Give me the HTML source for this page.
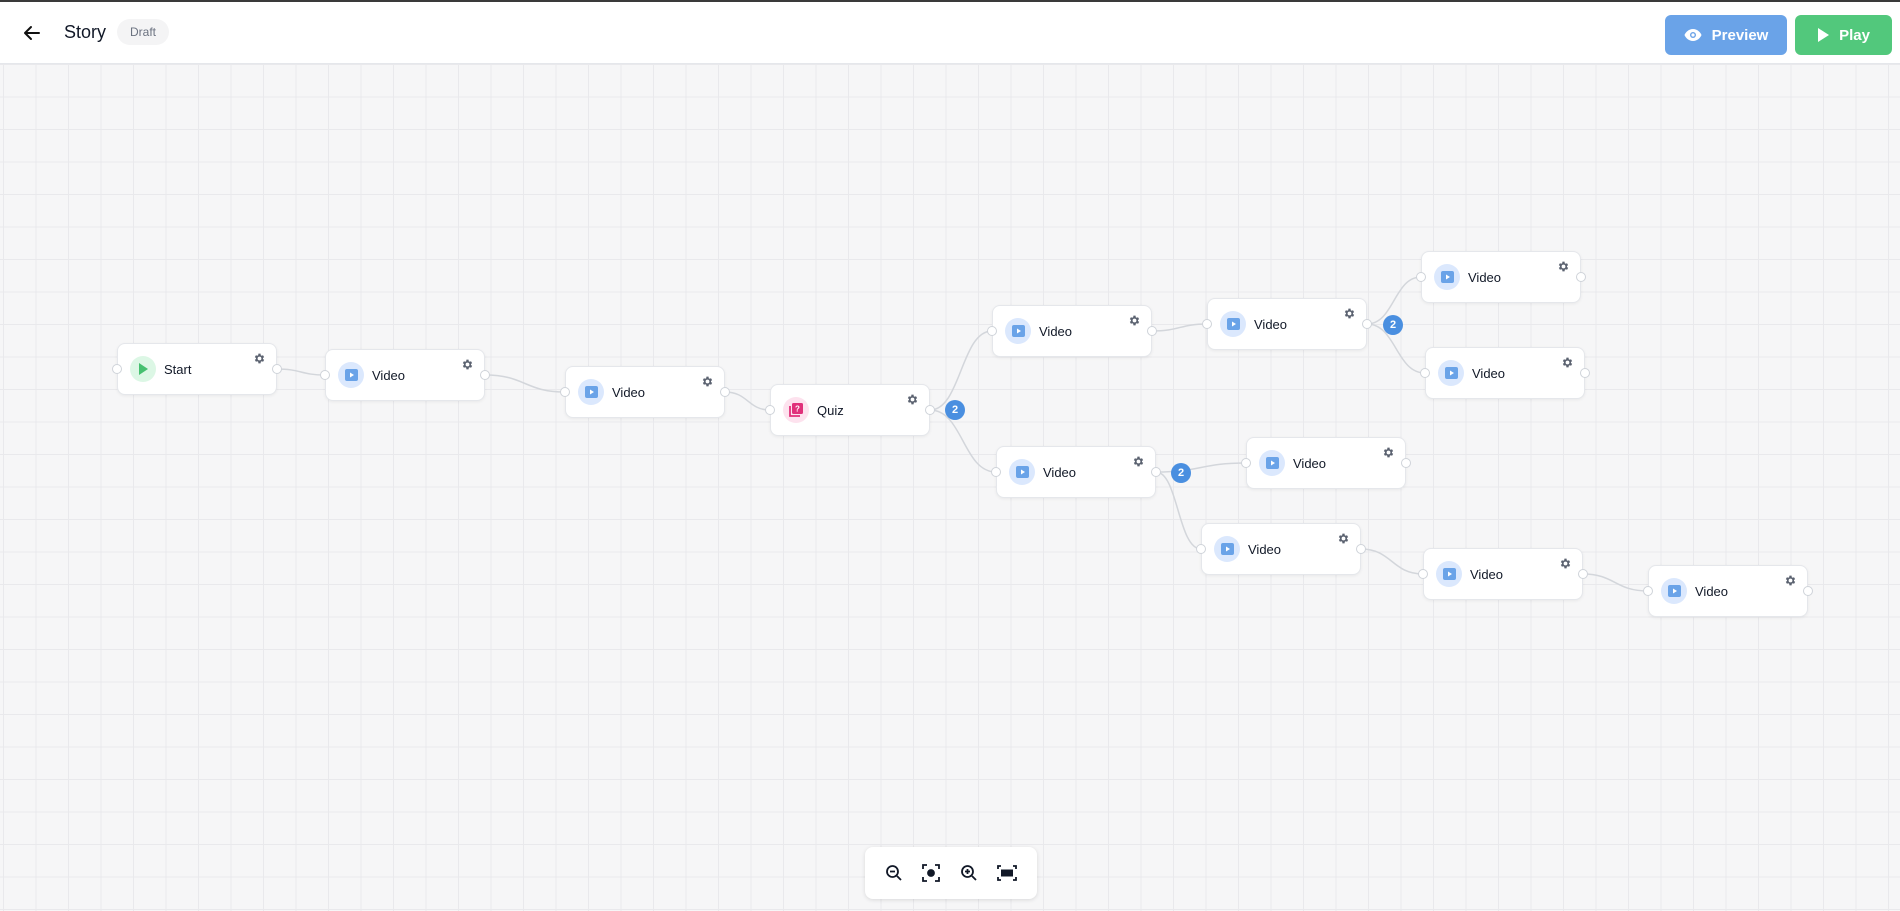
<!DOCTYPE html>
<html><head><meta charset="utf-8"><style>
*{margin:0;padding:0;box-sizing:border-box}
body{width:1900px;height:911px;overflow:hidden;font-family:"Liberation Sans",sans-serif;background:#f6f6f7;position:relative}
.top{position:absolute;left:0;top:0;width:1900px;height:2px;background:#3a3a3a}
.hdr{position:absolute;left:0;top:2px;width:1900px;height:62px;background:#fff;border-bottom:1px solid #e5e7eb}
.canvas{position:absolute;left:0;top:64px;width:1900px;height:847px;
background-image:linear-gradient(#e9e9ec 1px,transparent 1px),linear-gradient(90deg,#e9e9ec 1px,transparent 1px);
background-size:32.5px 32.5px;background-position:3px 0}
.btn{position:absolute;top:13px;height:40px;border-radius:6px;color:#fff;font-weight:bold;font-size:15px;display:flex;align-items:center;justify-content:center;gap:10px}
.node{position:absolute;width:160px;height:52px;background:#fff;border:1px solid #e5e7eb;border-radius:8px;box-shadow:0 1px 3px rgba(0,0,0,.06)}
.ic{position:absolute;left:12px;top:12px;width:26px;height:26px;border-radius:50%;display:flex;align-items:center;justify-content:center}
.lbl{position:absolute;left:46px;top:18px;font-size:13px;color:#111827}
.gear{position:absolute;right:10px;top:8px}
.h{position:absolute;top:20px;width:10px;height:10px;border-radius:50%;background:#fff;border:1px solid #cfd3d9}
.badge{position:absolute;width:20px;height:20px;border-radius:50%;background:#4a8fe0;color:#fff;font-size:11px;font-weight:bold;display:flex;align-items:center;justify-content:center}
.zoom{position:absolute;left:865px;top:847px;width:172px;height:52px;background:#fff;border-radius:8px;box-shadow:0 1px 4px rgba(0,0,0,.12);display:flex;align-items:center;justify-content:space-around;padding:0 10px}
</style></head><body>
<div class="top"></div>
<div class="hdr">
<svg style="position:absolute;left:22px;top:21px" width="20" height="20" viewBox="0 0 20 20"><path d="M17 10H3M9 4L3 10L9 16" stroke="#111" stroke-width="2" fill="none" stroke-linecap="round" stroke-linejoin="round"/></svg>
<div style="position:absolute;left:64px;top:20px;font-size:18px;color:#111827">Story</div>
<div style="position:absolute;left:117px;top:17px;width:52px;height:26px;border-radius:13px;background:#f4f4f5;color:#6b7280;font-size:12px;display:flex;align-items:center;justify-content:center">Draft</div>
<div class="btn" style="left:1665px;width:122px;background:#6aa3e8"><svg width="18" height="12" viewBox="0 0 18 12"><path d="M9 0C4.5 0 1.5 3.5 0.5 6C1.5 8.5 4.5 12 9 12S16.5 8.5 17.5 6C16.5 3.5 13.5 0 9 0Z" fill="#fff"/><circle cx="9" cy="6" r="3" fill="#6aa3e8"/><circle cx="9" cy="6" r="1.6" fill="#fff"/></svg>Preview</div>
<div class="btn" style="left:1795px;width:97px;background:#52c87c"><svg width="12" height="14" viewBox="0 0 12 14"><path d="M1 0L12 7L1 14Z" fill="#fff"/></svg>Play</div>
</div>
<div class="canvas"></div>
<svg style="position:absolute;left:0;top:0" width="1900" height="911" fill="none" stroke="#d3d6db" stroke-width="1.5">
<path d="M277 369C301 369 301 375 325 375"/>
<path d="M485 375C525 375 525 392 565 392"/>
<path d="M725 392C748 392 748 410 770 410"/>
<path d="M930 410C961 410 961 331 992 331"/>
<path d="M930 410C963 410 963 472 996 472"/>
<path d="M1152 331C1180 331 1180 324 1207 324"/>
<path d="M1367 324C1394 324 1394 277 1421 277"/>
<path d="M1367 324C1396 324 1396 373 1425 373"/>
<path d="M1156 472C1201 472 1201 463 1246 463"/>
<path d="M1156 472C1178 472 1178 549 1201 549"/>
<path d="M1361 549C1392 549 1392 574 1423 574"/>
<path d="M1583 574C1615 574 1615 591 1648 591"/>
</svg>
<div id="nodes"></div>
<script>
const gear='<svg class="gear" width="13" height="13" viewBox="0 0 24 24"><path fill="#5b6270" d="M19.4 13a7.5 7.5 0 000-2l2.1-1.6-2-3.5-2.5 1a7.6 7.6 0 00-1.7-1L15 3h-4l-.4 2.9a7.6 7.6 0 00-1.7 1l-2.5-1-2 3.5L6.5 11a7.5 7.5 0 000 2l-2.1 1.6 2 3.5 2.5-1a7.6 7.6 0 001.7 1L11 21h4l.4-2.9a7.6 7.6 0 001.7-1l2.5 1 2-3.5zM13 15.5a3.5 3.5 0 110-7 3.5 3.5 0 010 7z" transform="translate(-1 0)"/></svg>';
const vid='<div class="ic" style="background:#dbe8fd"><svg width="13" height="12" viewBox="0 0 13 12"><rect width="13" height="12" rx="2" fill="#6aa3e8"/><path d="M5 3.5L9 6L5 8.5Z" fill="#fff"/></svg></div>';
const start='<div class="ic" style="background:#dcf7e5"><svg width="10" height="12" viewBox="0 0 10 12"><path d="M1 0L10 6L1 12Z" fill="#45c06f"/></svg></div>';
const quiz='<div class="ic" style="background:#fde2ee"><svg width="14" height="14" viewBox="0 0 14 14"><rect x="3" y="0" width="11" height="11" rx="1.5" fill="#e0307a"/><path d="M1 3V13H11" stroke="#e0307a" stroke-width="1.8" fill="none"/><text x="8.5" y="8.5" font-size="8" fill="#fff" text-anchor="middle" font-family="Liberation Sans" font-weight="bold">?</text></svg></div>';
const N=[[117,343,start,'Start'],[325,349,vid,'Video'],[565,366,vid,'Video'],[770,384,quiz,'Quiz'],[992,305,vid,'Video'],[1207,298,vid,'Video'],[1421,251,vid,'Video'],[1425,347,vid,'Video'],[996,446,vid,'Video'],[1246,437,vid,'Video'],[1201,523,vid,'Video'],[1423,548,vid,'Video'],[1648,565,vid,'Video']];
let h='';
for(const [x,y,ic,l] of N){h+=`<div class="node" style="left:${x}px;top:${y}px">${ic}<div class="lbl">${l}</div>${gear}<div class="h" style="left:-6px"></div><div class="h" style="right:-6px"></div></div>`;}
for(const [x,y] of [[945,400],[1383,315],[1171,463]])h+=`<div class="badge" style="left:${x}px;top:${y}px">2</div>`;
document.getElementById('nodes').innerHTML=h;
</script>
<div class="zoom">
<svg width="18" height="18" viewBox="0 0 18 18" fill="none" stroke="#111827" stroke-width="1.8"><circle cx="7.5" cy="7.5" r="5.5"/><path d="M12 12L16 16M5 7.5H10"/></svg>
<svg width="18" height="18" viewBox="0 0 18 18" fill="none" stroke="#111827" stroke-width="1.8"><path d="M1 5V1H5M13 1H17V5M17 13V17H13M5 17H1V13"/><circle cx="9" cy="9" r="3" fill="#111827"/></svg>
<svg width="18" height="18" viewBox="0 0 18 18" fill="none" stroke="#111827" stroke-width="1.8"><circle cx="7.5" cy="7.5" r="5.5"/><path d="M12 12L16 16M5 7.5H10M7.5 5V10"/></svg>
<svg width="20" height="16" viewBox="0 0 20 16" fill="none" stroke="#111827" stroke-width="1.8"><path d="M1 4V1H4M16 1H19V4M19 12V15H16M4 15H1V12"/><rect x="4" y="4.5" width="12" height="7" fill="#111827" stroke="none"/></svg>
</div>
</body></html>
